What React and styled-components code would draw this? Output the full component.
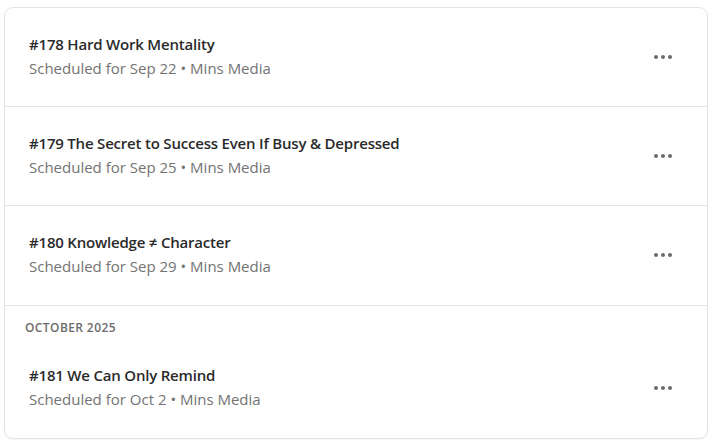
import styled, { createGlobalStyle } from "styled-components";

const GlobalStyle = createGlobalStyle`
	body {
		margin: 0;
		background: #ffffff;
		font-family: "Open Sans", "Noto Sans", sans-serif;
	}
`;

const Page = styled.div`
	padding: 7px 4px;
`;

const Card = styled.div`
	border: 1px solid #e3e3e3;
	border-radius: 9px;
	background: #ffffff;
	box-shadow: 0 1px 2px rgba(0, 0, 0, 0.04);
	padding-bottom: 1px;
	overflow: hidden;
`;

const Row = styled.div`
	display: flex;
	align-items: center;
	padding: 24px 24px 26px 24px;
	border-top: ${(props) => (props.divider ? "1px solid #e5e5e5" : "none")};
`;

const Info = styled.div`
	flex: 1;
	display: flex;
	flex-direction: column;
`;

const Title = styled.div`
	font-size: 15px;
	font-weight: 600;
	line-height: 24px;
	letter-spacing: -0.2px;
	color: #2a2a2a;
`;

const Meta = styled.div`
	font-size: 15px;
	line-height: 24px;
	color: #737373;
`;

const MoreButton = styled.button`
	width: 40px;
	height: 32px;
	margin-top: 2px;
	border: none;
	background: transparent;
	display: flex;
	align-items: center;
	justify-content: center;
	gap: 3px;
	padding: 0;
	cursor: pointer;
`;

const Dot = styled.span`
	width: 4px;
	height: 4px;
	border-radius: 50%;
	background: #6b6b6b;
`;

const SectionHeader = styled.div`
	border-top: 1px solid #e5e5e5;
	margin-top: 1px;
	padding: 14px 20px 3px;
	font-size: 12px;
	line-height: 16px;
	font-weight: 600;
	letter-spacing: 0.4px;
	color: #6b6b6b;
	text-transform: uppercase;
`;

const episodes = [
	{ id: 178, title: "Hard Work Mentality", date: "Sep 22" },
	{ id: 179, title: "The Secret to Success Even If Busy & Depressed", date: "Sep 25" },
	{ id: 180, title: "Knowledge ≠ Character", date: "Sep 29" },
];

const Episode = ({ ep, divider }) => (
	<Row divider={divider}>
		<Info>
			<Title>
				#{ep.id} {ep.title}
			</Title>
			<Meta>Scheduled for {ep.date} • Mins Media</Meta>
		</Info>
		<MoreButton aria-label="More">
			<Dot />
			<Dot />
			<Dot />
		</MoreButton>
	</Row>
);

const App = () => {
	return (
		<Page>
			<GlobalStyle />
			<Card>
				{episodes.map((ep, i) => (
					<Episode key={ep.id} ep={ep} divider={i > 0} />
				))}
				<SectionHeader>October 2025</SectionHeader>
				<Episode ep={{ id: 181, title: "We Can Only Remind", date: "Oct 2" }} />
			</Card>
		</Page>
	);
};

export default App;
